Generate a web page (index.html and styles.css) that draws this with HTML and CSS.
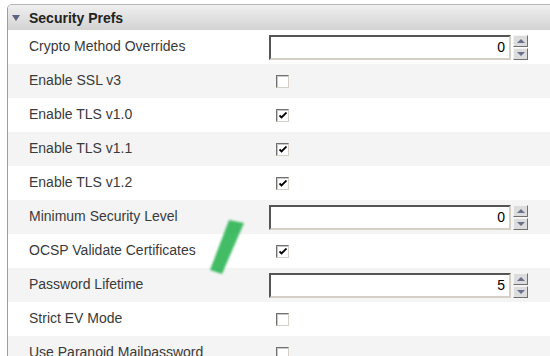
FILE: index.html
```html
<!DOCTYPE html>
<html lang="en">
<head>
  <meta charset="UTF-8" />
  <title>Security Prefs</title>
  <link rel="stylesheet" href="styles.css">
</head>
<body>
  <div class="panel">
    <div class="panel-head">
      <span class="twisty"></span>
      <span class="panel-title">Security Prefs</span>
    </div>

    <div class="pref">
      <span class="pref-name">Crypto Method Overrides</span>
      <div class="spin">
        <input type="text" class="spin-field" value="0" readonly>
        <div class="spin-btns"><span class="spin-up"></span><span class="spin-down"></span></div>
      </div>
    </div>
    <div class="pref">
      <span class="pref-name">Enable SSL v3</span>
      <span class="check"></span>
    </div>
    <div class="pref">
      <span class="pref-name">Enable TLS v1.0</span>
      <span class="check on"><svg viewBox="0 0 8 7" width="8" height="7"><path d="M0.5 3.5 L2.5 5.5 L7.5 0.5" fill="none" stroke="#000" stroke-width="1.8"/></svg></span>
    </div>
    <div class="pref">
      <span class="pref-name">Enable TLS v1.1</span>
      <span class="check on"><svg viewBox="0 0 8 7" width="8" height="7"><path d="M0.5 3.5 L2.5 5.5 L7.5 0.5" fill="none" stroke="#000" stroke-width="1.8"/></svg></span>
    </div>
    <div class="pref">
      <span class="pref-name">Enable TLS v1.2</span>
      <span class="check on"><svg viewBox="0 0 8 7" width="8" height="7"><path d="M0.5 3.5 L2.5 5.5 L7.5 0.5" fill="none" stroke="#000" stroke-width="1.8"/></svg></span>
    </div>
    <div class="pref">
      <span class="pref-name">Minimum Security Level</span>
      <div class="spin">
        <input type="text" class="spin-field" value="0" readonly>
        <div class="spin-btns"><span class="spin-up"></span><span class="spin-down"></span></div>
      </div>
    </div>
    <div class="pref">
      <span class="pref-name">OCSP Validate Certificates</span>
      <span class="check on"><svg viewBox="0 0 8 7" width="8" height="7"><path d="M0.5 3.5 L2.5 5.5 L7.5 0.5" fill="none" stroke="#000" stroke-width="1.8"/></svg></span>
    </div>
    <div class="pref">
      <span class="pref-name">Password Lifetime</span>
      <div class="spin">
        <input type="text" class="spin-field" value="5" readonly>
        <div class="spin-btns"><span class="spin-up"></span><span class="spin-down"></span></div>
      </div>
    </div>
    <div class="pref">
      <span class="pref-name">Strict EV Mode</span>
      <span class="check"></span>
    </div>
    <div class="pref">
      <span class="pref-name">Use Paranoid Mailpassword</span>
      <span class="check"></span>
    </div>
  </div>

  <!-- green highlighter mark over the list -->
  <svg class="marker" width="50" height="64" viewBox="0 0 50 64">
    <defs>
      <filter id="soft"><feGaussianBlur stdDeviation="1.3"/></filter>
    </defs>
    <polygon points="27,4 42,7 20,58 8,54" fill="#22b14c" opacity="0.85" filter="url(#soft)"/>
  </svg>
</body>
</html>
```

FILE: styles.css
```css
body {
  margin: 0;
  background: #fff;
  font-family: "Liberation Sans", Arial, sans-serif;
  overflow: hidden;
}
.panel {
  margin: 4px 0 0 7px;
  border-left: 1px solid #9c9c9c;
  border-top: 1px solid #b4b4b4;
  border-top-left-radius: 5px;
  width: 600px;
}
.panel-head {
  display: flex;
  align-items: center;
  height: 25px;
  padding-left: 4px;
  background: linear-gradient(#efefef, #d3d3d3);
  border-top-left-radius: 4px;
}
.twisty {
  width: 0;
  height: 0;
  border-left: 4px solid transparent;
  border-right: 4px solid transparent;
  border-top: 6px solid #5c6280;
  margin-right: 9px;
}
.panel-title {
  font-size: 14px;
  font-weight: bold;
  color: #222;
}
.pref {
  display: flex;
  align-items: center;
  height: 34px;
  padding-left: 21px;
  background: #fff;
}
.pref:nth-of-type(odd) {
  background: #f4f4f4;
}
.pref-name {
  width: 240px;
  padding-bottom: 2px;
  font-size: 14px;
  color: #3a3a3a;
}
.check {
  box-sizing: border-box;
  width: 13px;
  height: 13px;
  margin-left: 7px;
  margin-top: 1px;
  background: #fff;
  border: 1px solid;
  border-color: #707070 #d4d0c8 #d4d0c8 #707070;
  box-shadow: inset 1px 1px 0 #c8c8c8;
  display: flex;
  align-items: center;
  justify-content: center;
}
.spin {
  display: flex;
  align-items: center;
}
.spin-field {
  box-sizing: border-box;
  width: 242px;
  height: 25px;
  margin: 0;
  padding: 0 4px 0 0;
  border: 2px solid;
  border-color: #555 #d4d0c8 #d4d0c8 #555;
  background: #fff;
  text-align: right;
  font-family: "Liberation Sans", Arial, sans-serif;
  font-size: 14px;
  color: #000;
  outline: none;
}
.spin-btns {
  display: flex;
  flex-direction: column;
  gap: 1px;
  margin-left: 2px;
}
.spin-up,
.spin-down {
  box-sizing: border-box;
  width: 15px;
  height: 12px;
  background: #dcdcdc;
  border: 1px solid;
  border-color: #f4f4f4 #707070 #707070 #f4f4f4;
  display: flex;
  align-items: center;
  justify-content: center;
}
.spin-up::after,
.spin-down::after {
  content: "";
  width: 0;
  height: 0;
  border-left: 4px solid transparent;
  border-right: 4px solid transparent;
}
.spin-up::after {
  border-bottom: 4px solid #6a6f8a;
}
.spin-down::after {
  border-top: 4px solid #6a6f8a;
}
.marker {
  position: absolute;
  left: 202px;
  top: 216px;
}
```
